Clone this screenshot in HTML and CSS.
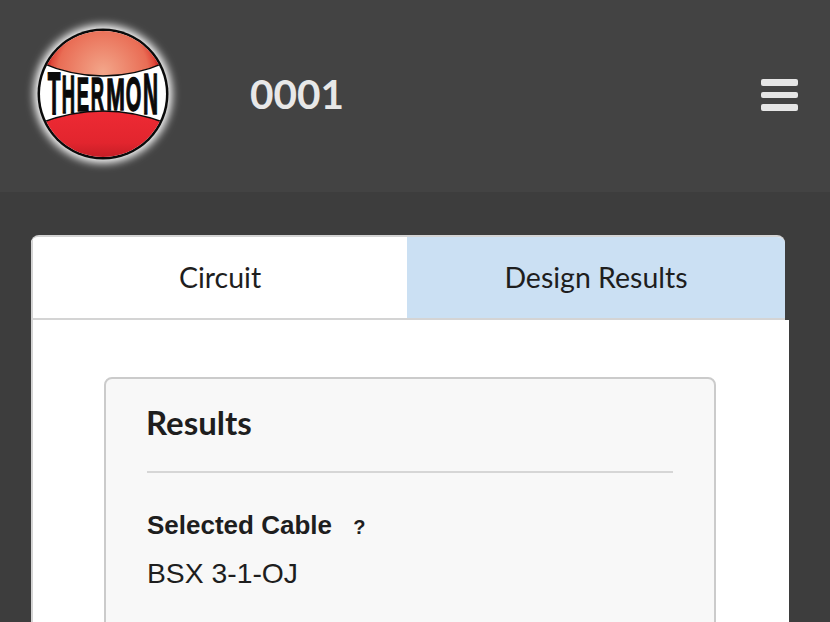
FILE: index.html
```html
<!DOCTYPE html>
<html lang="en">
<head>
<meta charset="utf-8">
<title>0001</title>
<link rel="stylesheet" href="styles.css">
</head>
<body>
<header class="topbar">
  <svg class="logo" width="160" height="160" viewBox="0 0 160 160" aria-label="Thermon">
    <defs>
      <filter id="glow" x="-30%" y="-30%" width="160%" height="160%"><feGaussianBlur stdDeviation="4.5"/></filter>
      <radialGradient id="cap" gradientUnits="userSpaceOnUse" cx="80" cy="58" r="56">
        <stop offset="0" stop-color="#f3a68a"/>
        <stop offset="0.8" stop-color="#e96d55"/>
        <stop offset="0.93" stop-color="#e0483a"/>
        <stop offset="1" stop-color="#c4201f"/>
      </radialGradient>
      <linearGradient id="base" x1="0" y1="0" x2="0" y2="1">
        <stop offset="0" stop-color="#ee2a34"/>
        <stop offset="0.6" stop-color="#e2252e"/>
        <stop offset="1" stop-color="#b81a22"/>
      </linearGradient>
      <clipPath id="disc"><circle cx="80" cy="80" r="63"/></clipPath>
    </defs>
    <circle cx="80" cy="80" r="69" fill="#fff" filter="url(#glow)"/>
    <circle cx="80" cy="80" r="65.5" fill="#0a0a0a"/>
    <g clip-path="url(#disc)">
      <rect x="15" y="15" width="130" height="130" fill="#fff"/>
      <path d="M10 45 Q45 62 80 62 Q115 62 150 45 L150 10 L10 10Z" fill="url(#cap)"/>
      <path d="M10 112 Q45 97 80 97 Q115 97 150 112 L150 150 L10 150Z" fill="url(#base)"/>
      <path d="M10 45 Q45 62 80 62 Q115 62 150 45" fill="none" stroke="#0a0a0a" stroke-width="1.5"/>
      <path d="M10 112 Q45 97 80 97 Q115 97 150 112" fill="none" stroke="#0a0a0a" stroke-width="1.5"/>
    </g>
    <g class="logo-letters">
      <text transform="translate(31 100) scale(0.52 1.5)" text-anchor="middle">T</text>
      <text transform="translate(45.5 99) scale(0.46 1.36)" text-anchor="middle">H</text>
      <text transform="translate(60 97) scale(0.46 1.2)" text-anchor="middle">E</text>
      <text transform="translate(74.5 96) scale(0.46 1.14)" text-anchor="middle">R</text>
      <text transform="translate(92.5 95.5) scale(0.56 1.12)" text-anchor="middle">M</text>
      <text transform="translate(110.5 97) scale(0.5 1.22)" text-anchor="middle">O</text>
      <text transform="translate(127.5 100) scale(0.52 1.43)" text-anchor="middle">N</text>
    </g>
  </svg>
  <h1 class="record-id">0001</h1>
  <button class="menu-btn" type="button" aria-label="Menu">
    <span class="menu-bar"></span>
    <span class="menu-bar"></span>
    <span class="menu-bar"></span>
  </button>
</header>
<main class="content">
  <nav class="tabs">
    <div class="tab">Circuit</div>
    <div class="tab tab-active">Design Results</div>
  </nav>
  <section class="panel">
    <div class="results-box">
      <h2 class="results-title">Results</h2>
      <hr class="divider">
      <div class="field-label">Selected Cable <span class="help">?</span></div>
      <div class="field-value">BSX 3-1-OJ</div>
    </div>
  </section>
</main>
</body>
</html>
```
FILE: styles.css
```css
* { box-sizing: border-box; }
html, body { margin: 0; height: 622px; overflow: hidden; }
body { background: #3d3d3d; font-family: "Lato", "Liberation Sans", sans-serif; color: #222; }

.topbar {
  height: 192px;
  background: #434343;
  display: flex;
  align-items: center;
  padding: 0 32px 2px 23px;
}
.logo { flex: none; display: block; margin-top: -2px; }
.logo-letters text {
  font-family: "Liberation Sans", sans-serif;
  font-weight: 700;
  font-size: 40px;
  fill: #0a0a0a;
  stroke: #0a0a0a;
  stroke-width: 1.2px;
}
.record-id {
  margin: 0 0 2px 67px;
  font-size: 40.5px;
  font-weight: 700;
  color: #e8e8e8;
  line-height: 1;
}
.menu-btn {
  margin-left: auto;
  width: 37px;
  padding: 0;
  border: 0;
  background: none;
  display: flex;
  flex-direction: column;
  gap: 6px;
}
.menu-bar { display: block; height: 6.5px; background: #e6e6e6; border-radius: 2px; }

.content { padding: 43px 41px 0 31px; }
.tabs {
  display: flex;
  margin-right: 4px;
  height: 85px;
  border-radius: 8px 8px 0 0;
  overflow: hidden;
  border-top: 2px solid #d4d4d4;
  border-bottom: 2px solid #d4d4d4;
  background: #fff;
}
.tab {
  display: flex;
  align-items: center;
  justify-content: center;
  font-size: 28.5px;
  color: #1e1e1e;
  padding-bottom: 2px;
  background: #fff;
  width: 376px;
  flex: none;
  border-left: 2px solid #d4d4d4;
}
.tab-active { flex: 1; width: auto; background: #cbe0f3; border-left: 0; }

.panel {
  background: #fff;
  padding: 57px 73px 0 71px;
  border-left: 2px solid #d4d4d4;
  height: 302px;
  overflow: hidden;
}
.results-box {
  background: #f8f8f8;
  border: 2px solid #cbcbcb;
  border-radius: 8px;
  padding: 23px 41px 0;
  height: 300px;
}
.results-title {
  margin: 0 0 0 -1px;
  font-size: 33px;
  font-weight: 700;
  line-height: 40px;
  color: #1e1e1e;
}
.divider {
  border: 0;
  height: 2px;
  background: #d6d6d6;
  margin: 29px 0 38px;
}
.field-label {
  font-family: "Liberation Sans", sans-serif;
  font-size: 26px;
  font-weight: 700;
  line-height: 29px;
  color: #1e1e1e;
}
.help { font-size: 20px; margin-left: 14px; }
.field-value {
  font-family: "Liberation Sans", sans-serif;
  font-size: 28.3px;
  line-height: 32px;
  margin-top: 15px;
  color: #1e1e1e;
}
```
